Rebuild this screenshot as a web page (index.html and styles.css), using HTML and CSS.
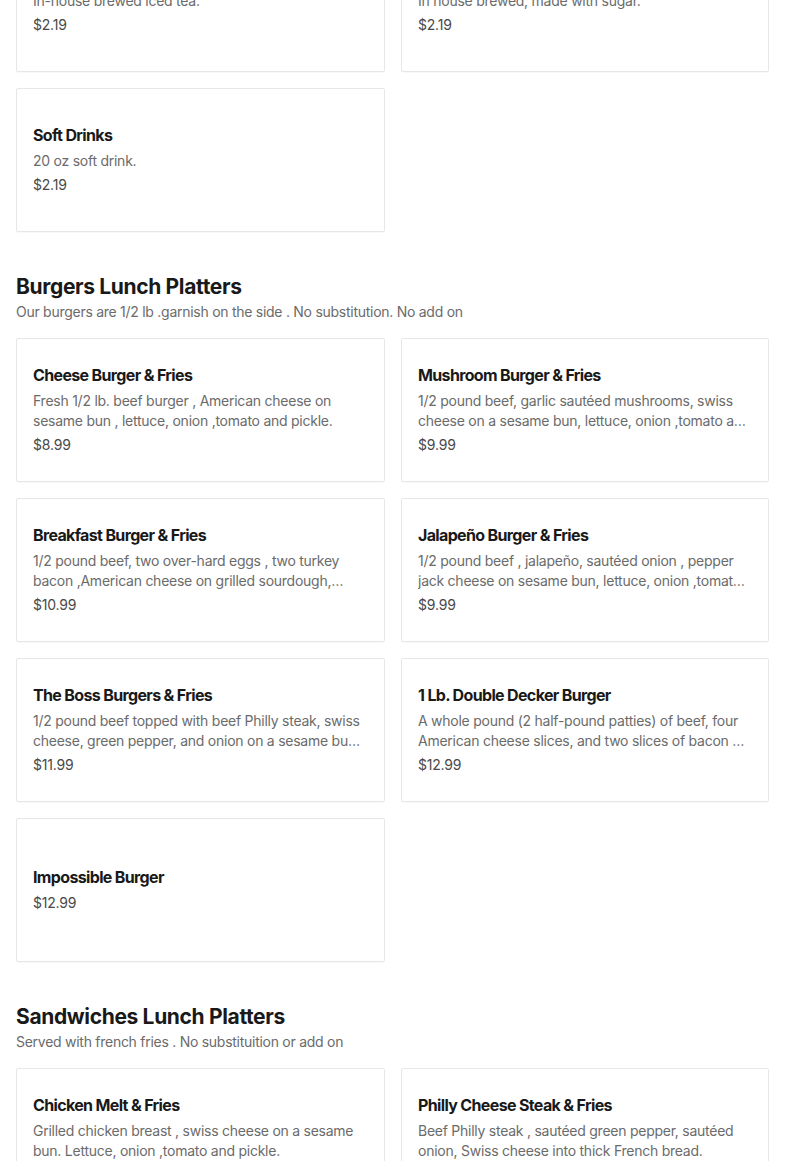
FILE: index.html
```html
<!DOCTYPE html>
<html lang="en">
<head>
<meta charset="utf-8">
<link rel="stylesheet" href="styles.css">
</head>
<body>
<main class="menu">
  <section class="section section--first">
    <div class="grid">
      <div class="card">
        <div class="card-body">
          <h3 class="item-title">Iced Tea</h3>
          <p class="item-desc">In-house brewed iced tea.</p>
          <p class="item-price">$2.19</p>
        </div>
      </div>
      <div class="card">
        <div class="card-body">
          <h3 class="item-title">Sweet Tea</h3>
          <p class="item-desc">In house brewed, made with sugar.</p>
          <p class="item-price">$2.19</p>
        </div>
      </div>
      <div class="card">
        <div class="card-body">
          <h3 class="item-title">Soft Drinks</h3>
          <p class="item-desc">20 oz soft drink.</p>
          <p class="item-price">$2.19</p>
        </div>
      </div>
    </div>
  </section>

  <section class="section">
    <h2 class="section-title">Burgers Lunch Platters</h2>
    <p class="section-sub">Our burgers are 1/2 lb .garnish on the side . No substitution. No add on</p>
    <div class="grid">
      <div class="card">
        <div class="card-body">
          <h3 class="item-title">Cheese Burger &amp; Fries</h3>
          <p class="item-desc">Fresh 1/2 lb. beef burger , American cheese on sesame bun , lettuce, onion ,tomato and pickle.</p>
          <p class="item-price">$8.99</p>
        </div>
      </div>
      <div class="card">
        <div class="card-body">
          <h3 class="item-title">Mushroom Burger &amp; Fries</h3>
          <p class="item-desc">1/2 pound beef, garlic sautéed mushrooms, swiss cheese on a sesame bun, lettuce, onion ,tomato and pickle.</p>
          <p class="item-price">$9.99</p>
        </div>
      </div>
      <div class="card">
        <div class="card-body">
          <h3 class="item-title">Breakfast Burger &amp; Fries</h3>
          <p class="item-desc">1/2 pound beef, two over-hard eggs , two turkey bacon ,American cheese on grilled sourdough, lettuce, onion, tomato and pickle.</p>
          <p class="item-price">$10.99</p>
        </div>
      </div>
      <div class="card">
        <div class="card-body">
          <h3 class="item-title">Jalapeño Burger &amp; Fries</h3>
          <p class="item-desc">1/2 pound beef , jalapeño, sautéed onion , pepper jack cheese on sesame bun, lettuce, onion ,tomato and pickle.</p>
          <p class="item-price">$9.99</p>
        </div>
      </div>
      <div class="card">
        <div class="card-body">
          <h3 class="item-title">The Boss Burgers &amp; Fries</h3>
          <p class="item-desc">1/2 pound beef topped with beef Philly steak, swiss cheese, green pepper, and onion on a sesame bun, lettuce, tomato and pickle.</p>
          <p class="item-price">$11.99</p>
        </div>
      </div>
      <div class="card">
        <div class="card-body">
          <h3 class="item-title">1 Lb. Double Decker Burger</h3>
          <p class="item-desc">A whole pound (2 half-pound patties) of beef, four American cheese slices, and two slices of bacon on a sesame bun.</p>
          <p class="item-price">$12.99</p>
        </div>
      </div>
      <div class="card">
        <div class="card-body">
          <h3 class="item-title">Impossible Burger</h3>
          <p class="item-price">$12.99</p>
        </div>
      </div>
    </div>
  </section>

  <section class="section">
    <h2 class="section-title">Sandwiches Lunch Platters</h2>
    <p class="section-sub">Served with french fries . No substituition or add on</p>
    <div class="grid">
      <div class="card">
        <div class="card-body">
          <h3 class="item-title">Chicken Melt &amp; Fries</h3>
          <p class="item-desc">Grilled chicken breast , swiss cheese on a sesame bun. Lettuce, onion ,tomato and pickle.</p>
          <p class="item-price">$10.99</p>
        </div>
      </div>
      <div class="card">
        <div class="card-body">
          <h3 class="item-title">Philly Cheese Steak &amp; Fries</h3>
          <p class="item-desc">Beef Philly steak , sautéed green pepper, sautéed onion, Swiss cheese into thick French bread.</p>
          <p class="item-price">$11.99</p>
        </div>
      </div>
    </div>
  </section>
</main>
</body>
</html>
```

FILE: styles.css
```css
* { box-sizing: border-box; }
html, body { margin: 0; padding: 0; background: #ffffff; }
body {
  font-family: "Inter", "Lato", "Liberation Sans", sans-serif;
  color: #191919;
  overflow: hidden;
}
.menu {
  padding: 0 16px;
  margin-top: -72px;
}
.section { margin-top: 41px; }
.section--first { margin-top: 0; }
.section-title {
  margin: 0;
  font-size: 21px;
  line-height: 28px;
  font-weight: 700;
  letter-spacing: -0.35px;
  color: #191919;
}
.section-sub {
  margin: 1px 0 0;
  font-size: 14px;
  line-height: 20px;
  letter-spacing: -0.27px;
  color: #6b6b6b;
}
.section-title + .section-sub + .grid { margin-top: 16px; }
.grid {
  display: grid;
  grid-template-columns: 369px 368px;
  gap: 16px;
}
.card {
  height: 144px;
  border: 1px solid #e7e7e7;
  border-radius: 2px;
  background: #fff;
  box-shadow: 0 1px 1px rgba(0,0,0,0.03);
  display: flex;
  align-items: center;
  padding: 0 16px 2px;
}
.card-body {
  display: flex;
  flex-direction: column;
  gap: 4px;
  min-width: 0;
  width: 100%;
}
.item-title {
  margin: 0;
  font-size: 16px;
  line-height: 24px;
  font-weight: 700;
  letter-spacing: -0.65px;
  color: #191919;
}
.item-desc {
  margin: 0;
  font-size: 14px;
  line-height: 20px;
  letter-spacing: -0.25px;
  color: #6b6b6b;
  display: -webkit-box;
  -webkit-line-clamp: 2;
  -webkit-box-orient: vertical;
  overflow: hidden;
}
.item-price {
  margin: 0;
  font-size: 14px;
  line-height: 20px;
  letter-spacing: -0.2px;
  color: #494949;
}
```
